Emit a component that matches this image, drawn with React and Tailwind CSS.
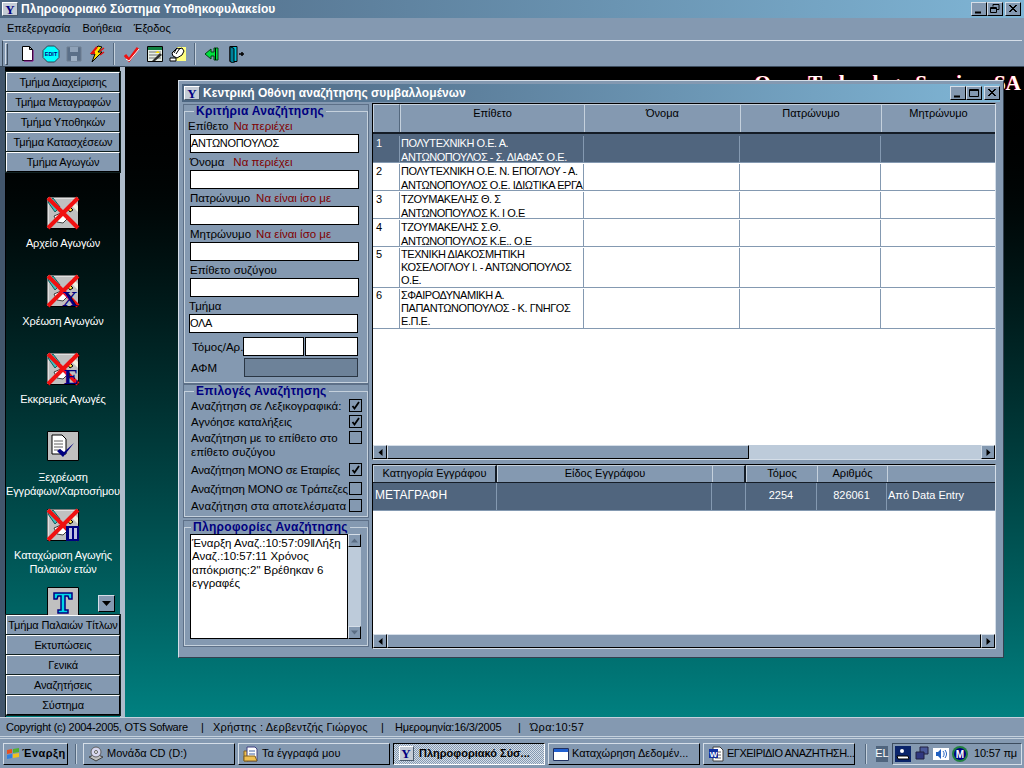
import React from 'react';

const font = { fontFamily: '"Liberation Sans", "Noto Sans", sans-serif' };
const serif = { fontFamily: '"Liberation Serif", serif' };

const raised = 'border border-t-[#d5dee8] border-l-[#d5dee8] border-r-black border-b-black bg-[#8499b1]';
const sunken = 'border border-t-[#3c4c5e] border-l-[#3c4c5e] border-r-[#d5dee8] border-b-[#d5dee8]';

function YLogo({ className = 'h-[14px] w-[16px]' }) {
  return (
    <div className={`flex shrink-0 items-center justify-center border border-t-white border-l-white border-r-[#4a5a6c] border-b-[#4a5a6c] bg-[#c4ccd6] text-[13px] font-bold leading-none text-[#000080] ${className}`} style={serif}>
      Y
    </div>
  );
}

function CapButton({ kind }) {
  return (
    <div className={`flex h-[14px] w-[16px] items-center justify-center ${raised}`}>
      <svg width="12" height="10" viewBox="0 0 12 10" fill="none" stroke="black">
        {kind === 'min' && <path d="M2 8.500h6" strokeWidth="2" />}
        {kind === 'max' && <path d="M1.500 1.500h9v7h-9zM1.500 2.500h9" />}
        {kind === 'restore' && <path d="M4 2.500V.5h6v5H8M1.500 3.500h6v5h-6zM1.500 4.500h6" />}
        {kind === 'close' && <path d="M2 1l7 7M3 1l7 7M9 1L2 8M10 1L3 8" />}
      </svg>
    </div>
  );
}

function Separator() {
  return <div className="mx-[5px] h-[22px] w-[2px] border-l border-r border-l-[#54687e] border-r-[#c5d1dd]" />;
}

function ToolIcon({ children }) {
  return (
    <div className="flex w-[23px] shrink-0 justify-center">
      <svg width="18" height="18" viewBox="0 0 18 18">{children}</svg>
    </div>
  );
}

function Toolbar() {
  return (
    <div className="mx-[2px] flex h-[26px] items-center border-t border-l border-t-[#d5dee8] border-l-[#3c4c5e] pl-[2px]">
      <div className="mr-[8px] h-[22px] w-[3px] border border-t-[#d5dee8] border-l-[#d5dee8] border-r-[#3c4c5e] border-b-[#3c4c5e]" />
      <ToolIcon><path d="M3.500 1.500h7l3 3v11h-10z" fill="white" stroke="black" /><path d="M10.500 1.500v3h3z" fill="#b0b0b0" stroke="black" /><path d="M14 5v11H5" fill="none" stroke="#800080" /></ToolIcon>
      <ToolIcon><path d="M5.500 1h7L17 5.500v7L12.500 17h-7L1 12.500v-7z" fill="#00ffff" stroke="#304050" /><text x="9" y="11" textAnchor="middle" fontSize="5.500" fontWeight="bold" fill="#000080" style={font}>EDIT</text></ToolIcon>
      <ToolIcon><path d="M2 2h14v14H2z" fill="#5a6f88" stroke="#6f7f90" /><path d="M5 2h8v5H5z" fill="#8fa2b8" /><path d="M6 11h6v5H6z" fill="#9eb0c4" /></ToolIcon>
      <ToolIcon><path d="M10 1L3 9h4l-3 8 10-10h-4l4-5z" fill="#ffe000" stroke="black" /><path d="M9 2L4 8h3" fill="none" stroke="#e01010" strokeWidth="2" /><path d="M16 3l-4 3M16 7l-4 3" stroke="#e01010" strokeWidth="1.500" /></ToolIcon>
      <Separator />
      <ToolIcon><path d="M2 10l4 5L15 3" fill="none" stroke="#f01010" strokeWidth="3" /><path d="M3 14l3 2 10-12" fill="none" stroke="white" /></ToolIcon>
      <ToolIcon><path d="M1.500 1.500h15v15h-15z" fill="#e8f0e8" stroke="black" /><path d="M2 2h14v3H2z" fill="#108040" /><path d="M3 7h12M3 10h12M3 13h12" stroke="#707070" /><path d="M6 16l8-8 2 2-7 6z" fill="#303030" /><path d="M9 8l3-2 2 2" fill="#ffe000" /></ToolIcon>
      <ToolIcon><path d="M8 2h9v14H6z" fill="#ffff80" /><path d="M3 8l5-5 2 1 3-1 2 3-2 4-5 3-4-2z" fill="white" stroke="black" /><path d="M1 13h6v3H1z" fill="white" stroke="black" /><path d="M8 3l-3 5M11 3L7 9" stroke="black" /></ToolIcon>
      <Separator />
      <ToolIcon><path d="M1 9l6-5v3h3V3h4v12h-4v-4H7v3z" fill="#00e040" stroke="#004010" /><path d="M11 3h1v12h-1z" fill="black" /></ToolIcon>
      <ToolIcon><path d="M3 1.500h7v15H3z" fill="#00c0d8" stroke="black" /><path d="M3 1.500l4 2v15l-4-2z" fill="#008098" stroke="black" /><path d="M12 9h5M15 7v4" stroke="black" strokeWidth="1.500" /></ToolIcon>
    </div>
  );
}

function SideButton({ children }) {
  return (
    <div className="flex h-[20px] shrink-0 items-center justify-center border border-t-white border-l-white border-r-black border-b-black bg-[#8499b1] whitespace-nowrap text-[11px] tracking-[-0.15px] text-black outline outline-1 outline-[#102020]">
      {children}
    </div>
  );
}

function CrossedIcon({ badge }) {
  return (
    <svg width="32" height="32" viewBox="0 0 32 32" className="overflow-visible">
      <path d="M.5.5h31v31H.5z" fill="#c0c0c0" stroke="black" />
      <path d="M1 1h30M1 1v30" stroke="white" />
      <path d="M1 5l5-4 7 9-5 5z" fill="#40c0c0" stroke="#106060" />
      <path d="M23 7l8 8V9l-6-6z" fill="#f0f0e0" />
      <path d="M22 9l4 4-3 2-3-4z" fill="#ffe040" stroke="black" />
      <path d="M7 19l7-3 7 5-5 5-6-1z" fill="white" stroke="#404040" />
      <path d="M1 1l30 30M31 1L1 31" stroke="#f01010" strokeWidth="4" />
      {badge === 'X' && <text x="23" y="31" textAnchor="middle" fontSize="22" fontWeight="bold" fill="#000080" style={serif}>X</text>}
      {badge === 'E' && <text x="24" y="31" textAnchor="middle" fontSize="22" fontWeight="bold" fill="#000080" style={serif}>E</text>}
      {badge === 'II' && <path d="M19 17h13v15H19z" fill="#000080" />}
      {badge === 'II' && <path d="M22 19h3v11h-3zM27 19h3v11h-3z" fill="#c0c0e0" />}
    </svg>
  );
}

function SideItem({ icon, lines }) {
  return (
    <div className="flex h-[78px] shrink-0 flex-col items-center">
      <div className="h-[32px] w-[32px]">{icon}</div>
      <div className="mt-[7px] text-center text-[11px] leading-[14px] tracking-[-0.15px] whitespace-nowrap text-white">
        {lines.map(l => <div key={l}>{l}</div>)}
      </div>
    </div>
  );
}

function Sidebar() {
  return (
    <div className="flex w-[125px] shrink-0 border-r-[5px] border-l-[5px] border-r-[#aebccb] border-l-[#42566c] bg-[#8499b1]">
      <div className="flex min-w-0 flex-1 flex-col border-l border-black bg-gradient-to-b from-black to-[#008080] pt-[5px]">
        <SideButton>Τμήμα Διαχείρισης</SideButton>
        <SideButton>Τμήμα Μεταγραφών</SideButton>
        <SideButton>Τμήμα Υποθηκών</SideButton>
        <SideButton>Τμήμα Κατασχέσεων</SideButton>
        <SideButton>Τμήμα Αγωγών</SideButton>
        <div className="relative flex min-h-0 flex-1 flex-col overflow-hidden pt-[25px]">
          <SideItem icon={<CrossedIcon />} lines={['Αρχείο Αγωγών']} />
          <SideItem icon={<CrossedIcon badge="X" />} lines={['Χρέωση Αγωγών']} />
          <SideItem icon={<CrossedIcon badge="E" />} lines={['Εκκρεμείς Αγωγές']} />
          <SideItem
            icon={
              <svg width="32" height="30" viewBox="0 0 32 30">
                <path d="M.5.5h31v29H.5z" fill="#c0c0c0" stroke="black" />
                <path d="M5 4h10l4 4v15H5z" fill="white" stroke="black" />
                <path d="M7 10h9M7 13h9M7 16h9M7 19h7" stroke="#606060" />
                <path d="M10 20l6 6 11-14-10 9-4-3z" fill="#000080" />
              </svg>
            }
            lines={['Ξεχρέωση', 'Εγγράφων/Χαρτοσήμου']}
          />
          <SideItem icon={<CrossedIcon badge="II" />} lines={['Καταχώριση Αγωγής', 'Παλαιών ετών']} />
          <SideItem
            icon={
              <svg width="32" height="32" viewBox="0 0 32 32">
                <path d="M.5.5h31v31H.5z" fill="#c0c0c0" stroke="black" />
                <path d="M7 6h18v6h-3l-1-3h-3v14h3v3H11v-3h3V9h-3l-1 3H7z" fill="#00d8e8" stroke="#000080" strokeWidth="1.500" />
              </svg>
            }
            lines={[]}
          />
          <div className={`absolute top-[423px] left-[92px] flex h-[17px] w-[17px] items-center justify-center ${raised}`}>
            <svg width="9" height="5" viewBox="0 0 9 5"><path d="M0 0h9L4.500 5z" fill="black" /></svg>
          </div>
        </div>
        <SideButton>Τμήμα Παλαιών Τίτλων</SideButton>
        <SideButton>Εκτυπώσεις</SideButton>
        <SideButton>Γενικά</SideButton>
        <SideButton>Αναζητήσεις</SideButton>
        <SideButton>Σύστημα</SideButton>
        <div className="h-[2px] shrink-0" />
      </div>
    </div>
  );
}

function Field({ label, hint, value, gap = 'gap-[6px]', tight, labelClass = '' }) {
  return (
    <div className={`h-[36px] ${tight ? 'pl-[4px]' : 'pl-[5px]'}`}>
      <div className={`flex h-[16px] items-center pt-[2px] whitespace-nowrap text-[11.500px] leading-none text-black ${gap}`}>
        <span className={labelClass}>{label}</span>
        {hint && <span className="text-[#800000]">{hint}</span>}
      </div>
      <div className="flex h-[19px] w-[169px] items-center border border-black bg-white text-[11px] tracking-[-0.3px] text-black">{value}</div>
    </div>
  );
}

function GroupBox({ title, className = '', legend = 'ml-[9px]', children }) {
  return (
    <fieldset className={`border border-[#c5d1dd] outline outline-1 outline-[#5d7088] ${className}`}>
      <legend className={`px-[2px] text-[12px] leading-[13px] font-bold tracking-[0.3px] text-[#000080] ${legend}`}>{title}</legend>
      {children}
    </fieldset>
  );
}

function Check({ on }) {
  return (
    <div className="flex h-[13px] w-[13px] shrink-0 items-center justify-center border border-black bg-[#8499b1]">
      {on && <svg width="9" height="9" viewBox="0 0 9 9"><path d="M1.500 5l2 2.500L8 1" fill="none" stroke="black" strokeWidth="1.800" /></svg>}
    </div>
  );
}

function Option({ lines, on, h, textClass = '' }) {
  return (
    <div className={`flex items-start pl-[6px] ${h}`}>
      <div className={`w-[158px] shrink-0 text-[11.500px] leading-[14px] whitespace-nowrap text-black ${textClass}`}>
        {lines.map(l => <div key={l}>{l}</div>)}
      </div>
      <Check on={on} />
    </div>
  );
}

function Arrow({ dir, dim }) {
  const c = dim ? '#5b6e84' : 'black';
  const d = { up: 'M0 5.500L3.500 1.500 7 5.500z', down: 'M0 1.500h7L3.500 5.500z', left: 'M5.500 0v7L1.500 3.500z', right: 'M1.500 0v7l4-3.500z' }[dir];
  return <svg width="7" height="7" viewBox="0 0 7 7"><path d={d} fill={c} /></svg>;
}

function HScroll({ thumb }) {
  return (
    <div className="flex h-[14px] shrink-0 bg-[#bdcbda]">
      <div className={`flex h-[14px] w-[14px] shrink-0 items-center justify-center ${raised}`}><Arrow dir="left" /></div>
      <div className={`h-[14px] min-w-0 ${raised} ${thumb ? '' : 'flex-1'}`} style={thumb ? { width: thumb } : undefined} />
      {thumb && <div className="flex-1" />}
      <div className={`flex h-[14px] w-[14px] shrink-0 items-center justify-center ${raised}`}><Arrow dir="right" /></div>
    </div>
  );
}

const mainRows = [
  { n: '1', h: 'h-[29px] pt-[2px] leading-[14px]', lines: ['ΠΟΛΥΤΕΧΝΙΚΗ Ο.Ε. Α.', 'ΑΝΤΩΝΟΠΟΥΛΟΣ - Σ. ΔΙΑΦΑΣ Ο.Ε.'], sel: true },
  { n: '2', h: 'h-[28px] pt-[1px] leading-[14px]', lines: ['ΠΟΛΥΤΕΧΝΙΚΗ Ο.Ε. Ν. ΕΠΟΓΛΟΥ - Α.', 'ΑΝΤΩΝΟΠΟΥΛΟΣ Ο.Ε. ΙΔΙΩΤΙΚΑ ΕΡΓΑ'] },
  { n: '3', h: 'h-[28px] pt-[1px] leading-[14px]', lines: ['ΤΖΟΥΜΑΚΕΛΗΣ Θ. Σ', 'ΑΝΤΩΝΟΠΟΥΛΟΣ Κ. Ι Ο.Ε'] },
  { n: '4', h: 'h-[28px] pt-[1px] leading-[14px]', lines: ['ΤΖΟΥΜΑΚΕΛΗΣ Σ.Θ.', 'ΑΝΤΩΝΟΠΟΥΛΟΣ Κ.Ε.. Ο.Ε'] },
  { n: '5', h: 'h-[41px] pt-[1px] leading-[13px]', lines: ['ΤΕΧΝΙΚΗ ΔΙΑΚΟΣΜΗΤΙΚΗ', 'ΚΟΣΕΛΟΓΛΟΥ Ι. - ΑΝΤΩΝΟΠΟΥΛΟΣ', 'Ο.Ε.'] },
  { n: '6', h: 'h-[41px] pt-[1px] leading-[13px]', lines: ['ΣΦΑΙΡΟΔΥΝΑΜΙΚΗ Α.', 'ΠΑΠΑΝΤΩΝΟΠΟΥΛΟΣ - Κ. ΓΝΗΓΟΣ', 'Ε.Π.Ε.'] },
];

function MainGrid() {
  const cell = 'shrink-0 border-r border-r-[#8499b1]';
  const head = 'shrink-0 border-t border-l border-t-[#c5d1dd] border-l-[#c5d1dd]';
  return (
    <div className={`flex h-[357px] flex-col ${sunken} border-t-black border-l-black bg-white`}>
      <div className="flex h-[30px] shrink-0 border-b-2 border-b-[#141c26] bg-[#8499b1] text-center text-[11px] text-black">
        <div className={`w-[27px] border-r border-r-[#54687e] ${head}`} />
        <div className={`w-[184px] ${head}`}>Επίθετο</div>
        <div className={`w-[156px] ${head}`}>Όνομα</div>
        <div className={`w-[141px] ${head}`}>Πατρώνυμο</div>
        <div className={`flex-1 ${head}`}>Μητρώνυμο</div>
      </div>
      <div className="min-h-0 flex-1">
        {mainRows.map(r => (
          <div key={r.n} className={`flex border-b border-b-[#8499b1] text-[11px] ${r.h} ${r.sel ? 'bg-[#50657e] text-white' : 'bg-white text-black'}`}>
            <div className={`w-[27px] pl-[3px] ${cell}`}>{r.n}</div>
            <div className={`w-[184px] overflow-hidden pl-[1px] tracking-[-0.45px] whitespace-nowrap ${cell}`}>
              {r.lines.map(l => <div key={l}>{l}</div>)}
            </div>
            <div className={`w-[156px] ${cell}`} />
            <div className={`w-[141px] ${cell}`} />
            <div className="flex-1" />
          </div>
        ))}
      </div>
      <HScroll thumb={362} />
    </div>
  );
}

function DocsGrid() {
  const head = 'shrink-0 border-t border-l border-t-[#c5d1dd] border-l-[#c5d1dd]';
  const cell = 'shrink-0 border-r border-r-[#8499b1]';
  return (
    <div className={`mt-[4px] flex h-[185px] flex-col ${sunken} border-t-black border-l-black bg-white`}>
      <div className="flex h-[18px] shrink-0 border-b border-b-[#141c26] bg-[#8499b1] text-center text-[11px] leading-[14px] text-black">
        <div className={`w-[124px] border-r-2 border-r-[#141c26] ${head}`}>Κατηγορία Εγγράφου</div>
        <div className={`w-[215px] ${head}`}>Είδος Εγγράφου</div>
        <div className={`w-[34px] border-r-2 border-r-[#141c26] ${head}`} />
        <div className={`w-[71px] ${head}`}>Τόμος</div>
        <div className={`w-[70px] ${head}`}>Αριθμός</div>
        <div className={`flex-1 ${head}`} />
      </div>
      <div className="flex h-[28px] shrink-0 items-stretch border-b border-b-[#8499b1] bg-[#50657e] text-[11px] leading-[24px] text-white">
        <div className={`w-[124px] pl-[2px] text-[12px] ${cell}`}>ΜΕΤΑΓΡΑΦΗ</div>
        <div className={`w-[215px] ${cell}`} />
        <div className={`w-[34px] ${cell}`} />
        <div className={`w-[71px] text-center ${cell}`}>2254</div>
        <div className={`w-[70px] text-center ${cell}`}>826061</div>
        <div className="flex-1 pl-[1px]">Από Data Entry</div>
      </div>
      <div className="flex-1" />
      <HScroll />
    </div>
  );
}

function SearchWindow() {
  return (
    <div className="absolute top-[13px] left-[53px] flex h-[578px] w-[826px] flex-col border border-t-[#d5dee8] border-l-[#d5dee8] border-r-[#33414f] border-b-[#33414f] bg-[#8499b1] p-[3px] text-[11px]">
      <div className="flex h-[18px] shrink-0 items-center justify-between bg-gradient-to-r from-[#4c6580] to-[#7fb5d5] pl-[2px]">
        <div className="flex items-center gap-[3px] text-[12px] font-bold tracking-[0.05px] text-white">
          <YLogo />
          <span>Κεντρική Οθόνη αναζήτησης συμβαλλομένων</span>
        </div>
        <div className="flex">
          <CapButton kind="min" />
          <CapButton kind="max" />
          <div className="w-[2px]" />
          <CapButton kind="close" />
        </div>
      </div>
      <div className="flex min-h-0 flex-1 gap-[3px] pt-[1px]">
        <div className="flex w-[187px] shrink-0 flex-col pr-[1px] pl-[2px]">
          <GroupBox title="Κριτήρια Αναζήτησης" className="mt-[2px] h-[278px]">
            <Field label="Επίθετο" hint="Να περιέχει" value="ΑΝΤΩΝΟΠΟΥΛΟΣ" labelClass="-ml-[2px]" gap="gap-[5px]" />
            <Field label="Όνομα" hint="Να περιέχει" gap="gap-[9px]" />
            <Field label="Πατρώνυμο" hint="Να είναι ίσο με" />
            <Field label="Μητρώνυμο" hint="Να είναι ίσο με" gap="gap-[5px]" />
            <Field label="Επίθετο συζύγου" />
            <Field label="Τμήμα" value="ΟΛΑ" tight />
            <div className="mt-[2px] flex h-[21px] items-center pl-[7px] text-[11.500px] leading-none">
              <span className="w-[50px] pt-[2px] whitespace-nowrap">Τόμος/Αρ.</span>
              <div className="ml-[1px] h-[19px] w-[61px] border border-black bg-white" />
              <div className="ml-[1px] h-[19px] w-[53px] border border-black bg-white" />
            </div>
            <div className="flex h-[21px] items-center pl-[6px] text-[11.500px] leading-none">
              <span className="w-[53px] pt-[2px]">ΑΦΜ</span>
              <div className="h-[19px] w-[114px] border border-[#2a3644] bg-[#6d8299]" />
            </div>
          </GroupBox>
          <GroupBox title="Επιλογές Αναζήτησης" className="mt-[2px] h-[132px]">
            <div className="pt-[1px]">
              <Option lines={['Αναζήτηση σε Λεξικογραφικά:']} on h="h-[16px]" />
              <Option lines={['Αγνόησε καταλήξεις']} on h="h-[16px]" />
              <Option lines={['Αναζήτηση με το επίθετο στο', 'επίθετο συζύγου']} h="h-[32px]" />
              <Option lines={['Αναζήτηση ΜΟΝΟ σε Εταιρίες']} on h="h-[19px]" textClass="tracking-[-0.2px]" />
              <Option lines={['Αναζήτηση ΜΟΝΟ σε Τράπεζες']} h="h-[17px]" textClass="tracking-[-0.2px]" />
              <Option lines={['Αναζήτηση στα αποτελέσματα']} h="h-[16px]" textClass="tracking-[0.1px]" />
            </div>
          </GroupBox>
          <GroupBox title="Πληροφορίες Αναζήτησης" legend="ml-[6px]" className="mt-[4px] h-[125px]">
            <div className="flex h-[105px] pl-[5px]">
              <div className="h-[105px] w-[158px] border border-black bg-white px-[1px] pt-[2px] text-[11.500px] leading-[13.300px] text-black">
                Έναρξη Αναζ.:10:57:09‖Λήξη Αναζ.:10:57:11 Χρόνος απόκρισης:2" Βρέθηκαν 6 εγγραφές
              </div>
              <div className="flex h-[105px] w-[13px] flex-col justify-between bg-[#bdcbda]">
                <div className={`flex h-[13px] items-center justify-center ${raised}`}><Arrow dir="up" dim /></div>
                <div className={`flex h-[13px] items-center justify-center ${raised}`}><Arrow dir="down" dim /></div>
              </div>
            </div>
          </GroupBox>
        </div>
        <div className="flex min-w-0 flex-1 flex-col pr-[4px]">
          <MainGrid />
          <DocsGrid />
        </div>
      </div>
    </div>
  );
}

function TaskButton({ icon, label, active, textClass = '' }) {
  return (
    <div className={`flex h-[22px] w-[152px] shrink-0 items-center gap-[3px] overflow-hidden pl-[4px] text-[11px] whitespace-nowrap text-black ${active ? 'border border-t-black border-l-black border-r-white border-b-white bg-[repeating-conic-gradient(#d5dee8_0_25%,#8499b1_0_50%)] bg-[length:2px_2px] font-bold' : raised}`}>
      <div className="flex w-[16px] shrink-0 justify-center">{icon}</div>
      <span className={`${active ? 'ml-[2px]' : ''} ${textClass}`}>{label}</span>
    </div>
  );
}

export default function App() {
  return (
    <div className="flex h-[768px] w-[1024px] flex-col overflow-hidden bg-[#8499b1]" style={font}>
      <div className="flex h-[18px] shrink-0 items-center justify-between bg-gradient-to-r from-[#4c6580] to-[#7fb5d5] pr-[3px] pl-[2px]">
        <div className="flex items-center gap-[3px] text-[12px] font-bold tracking-[0.05px] text-white">
          <YLogo />
          <span>Πληροφοριακό Σύστημα Υποθηκοφυλακείου</span>
        </div>
        <div className="flex">
          <CapButton kind="min" />
          <CapButton kind="restore" />
          <div className="w-[2px]" />
          <CapButton kind="close" />
        </div>
      </div>

      <div className="flex h-[20px] shrink-0 items-center gap-[12px] pl-[7px] text-[11px] text-black">
        <span>Επεξεργασία</span>
        <span>Βοήθεια</span>
        <span>Έξοδος</span>
      </div>

      <div className="shrink-0 pt-[2px]"><Toolbar /></div>

      <div className="flex min-h-0 flex-1 border-t border-t-[#3c4c5e]">
        <Sidebar />
        <div className="relative min-w-0 flex-1 overflow-hidden bg-gradient-to-b from-black to-[#008080]">
          <div className="absolute top-[1px] right-[3px] text-[21px] font-bold whitespace-nowrap text-white [text-shadow:-1px_0_0_#f00000]" style={serif}>
            Open Technology Services SA
          </div>
          <SearchWindow />
        </div>
      </div>

      <div className="flex h-[20px] shrink-0 items-center border-t border-b border-[#c5d1dd] pl-[6px] text-[11px] whitespace-nowrap text-black">
        <span className="w-[195px] tracking-[-0.25px]">Copyright (c) 2004-2005, OTS Sofware</span>
        <span className="w-[12px]">|</span>
        <span className="w-[168px] tracking-[0.2px]">Χρήστης : Δερβεντζής Γιώργος</span>
        <span className="w-[14px]">|</span>
        <span className="w-[123px] tracking-[-0.2px]">Ημερομηνία:16/3/2005</span>
        <span className="w-[12px]">|</span>
        <span className="tracking-[0.3px]">Ώρα:10:57</span>
      </div>

      <div className="mt-[1px] flex h-[30px] shrink-0 items-center gap-[3px] border-t border-t-[#c5d1dd] pl-[3px]">
        <div className={`flex h-[22px] w-[65px] shrink-0 items-center gap-[1px] pl-[2px] text-[11px] font-bold tracking-[0.5px] text-black ${raised}`}>
          <svg width="15" height="14" viewBox="0 0 15 14" className="shrink-0">
            <path d="M1 3l5-1v4l-5 1z" fill="#e85020" />
            <path d="M7 2l6-1v4l-6 1z" fill="#50b030" />
            <path d="M1 8l5-1v4l-5 1z" fill="#3080e0" />
            <path d="M7 7l6-1v4l-6 1z" fill="#f0c020" />
          </svg>
          <span>Έναρξη</span>
        </div>
        <div className="mr-[3px] ml-[4px] h-[20px] w-[2px] border-l border-r border-l-[#54687e] border-r-[#c5d1dd]" />
        <TaskButton
          label="Μονάδα CD (D:)"
          icon={<svg width="16" height="16" viewBox="0 0 16 16"><path d="M1 11l7-3 7 3-7 4z" fill="#c0c0c0" stroke="#404040" /><circle cx="8" cy="6" r="5" fill="#d8d8f0" stroke="#606060" /><circle cx="8" cy="6" r="1.500" fill="#ffffff" stroke="#606060" /></svg>}
        />
        <TaskButton
          label="Τα έγγραφά μου"
          icon={<svg width="16" height="16" viewBox="0 0 16 16"><path d="M1 5h4v10H1z" fill="#f0c050" stroke="#806020" /><path d="M4 1h8l2 2v12H4z" fill="white" stroke="#404080" /><path d="M6 5h6M6 8h6M6 11h6" stroke="#4060a0" /><path d="M1 15h13l-2-5H1z" fill="#f0c050" stroke="#806020" /></svg>}
        />
        <TaskButton label="Πληροφοριακό Σύσ..." active icon={<YLogo className="h-[15px] w-[15px]" />} />
        <TaskButton
          label="Καταχώρηση Δεδομέν..."
          icon={<svg width="16" height="16" viewBox="0 0 16 16"><path d="M.5 2.500h15v12H.5z" fill="white" stroke="#203060" /><path d="M1 3h14v3H1z" fill="#2060d0" /></svg>}
        />
        <TaskButton
          label="ΕΓΧΕΙΡΙΔΙΟ ΑΝΑΖΗΤΗΣΗ..."
          textClass="tracking-[-0.5px]"
          icon={<svg width="16" height="16" viewBox="0 0 16 16"><path d="M5 1h7l3 3v11H5z" fill="white" stroke="#404040" /><path d="M7 6h6M7 9h6M7 12h6" stroke="#606060" /><path d="M1 3h9v9H1z" fill="#1030a0" /><text x="5.500" y="10.500" textAnchor="middle" fontSize="8" fontWeight="bold" fill="white" style={font}>W</text></svg>}
        />
        <div className="ml-[7px] h-[20px] w-[2px] shrink-0 border-l border-r border-l-[#54687e] border-r-[#c5d1dd]" />
        <div className="ml-[6px] flex h-[16px] w-[12px] shrink-0 items-center justify-center bg-[#50657e] text-[11px] text-white">EL</div>
        <div className={`ml-[1px] flex h-[22px] w-[130px] shrink-0 items-center gap-[3px] pl-[2px] ${sunken}`}>
          <svg width="16" height="16" viewBox="0 0 16 16" className="shrink-0"><path d="M0 0h16v16H0z" fill="#0a246a" /><path d="M2 10h11l1 3H3z" fill="white" stroke="black" /><circle cx="7" cy="5" r="2" fill="white" /></svg>
          <svg width="16" height="16" viewBox="0 0 16 16" className="shrink-0"><path d="M6 1h8v7H6z" fill="#4a5a9a" stroke="#202040" /><path d="M2 6h8v7H2z" fill="#303880" stroke="#202040" /></svg>
          <svg width="16" height="16" viewBox="0 0 16 16" className="shrink-0"><path d="M0 2h16v12H0z" fill="white" /><path d="M3 6h2l3-3v10L5 10H3z" fill="#2060c0" /><path d="M10 5c1.500 2 1.500 4 0 6M12 4c2 3 2 5 0 8" fill="none" stroke="#2060c0" /></svg>
          <svg width="16" height="16" viewBox="0 0 16 16" className="shrink-0"><circle cx="8" cy="8" r="8" fill="#208040" /><circle cx="8" cy="8" r="6" fill="#000080" /><text x="8" y="11.500" textAnchor="middle" fontSize="10" fontWeight="bold" fill="white" style={font}>M</text></svg>
          <span className="ml-[3px] text-[11px] tracking-[-0.2px] whitespace-nowrap text-black">10:57 πμ</span>
        </div>
      </div>
    </div>
  );
}
